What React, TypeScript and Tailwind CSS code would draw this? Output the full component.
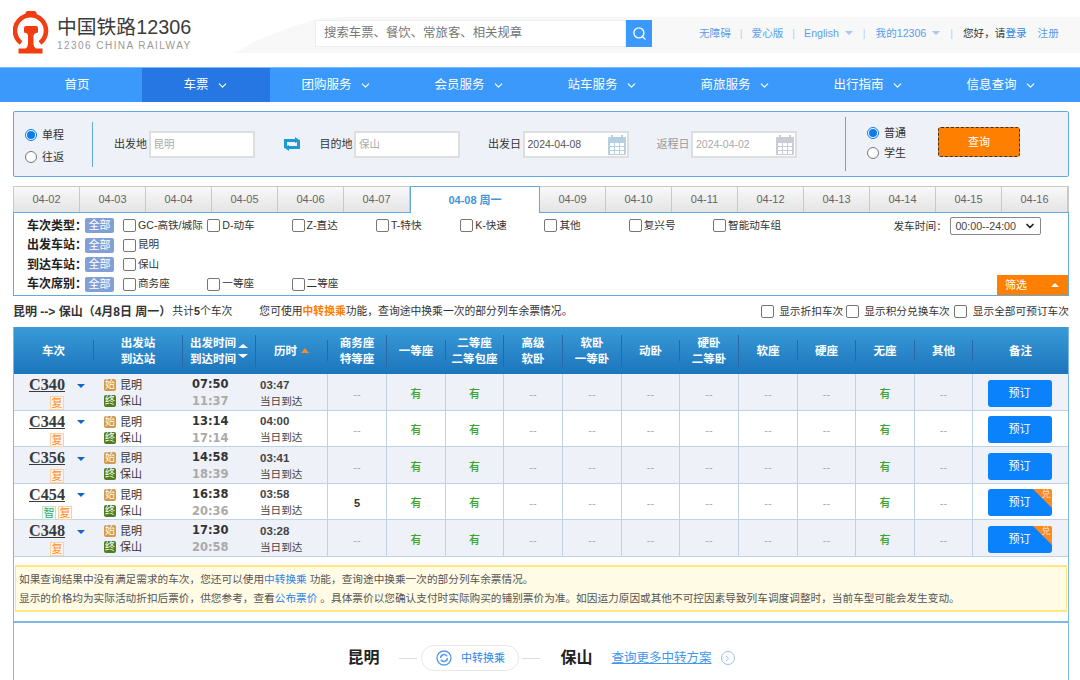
import { Search, ChevronDown, ChevronRight } from "lucide-react";

const widths = "grid-cols-[80px_89px_73px_72px_59px_59px_58px_59px_59px_58px_59px_59px_58px_59px_58px_95px]";
const headers = [["车次"], ["出发站", "到达站"], ["出发时间", "到达时间"], ["历时"], ["商务座", "特等座"], ["一等座"], ["二等座", "二等包座"], ["高级", "软卧"], ["软卧", "一等卧"], ["动卧"], ["硬卧", "二等卧"], ["软座"], ["硬座"], ["无座"], ["其他"], ["备注"]];
const rows = [
  { no: "C340", tags: ["复"], dep: "07:50", arr: "11:37", dur: "03:47", biz: "--", swap: false },
  { no: "C344", tags: ["复"], dep: "13:14", arr: "17:14", dur: "04:00", biz: "--", swap: false },
  { no: "C356", tags: ["复"], dep: "14:58", arr: "18:39", dur: "03:41", biz: "--", swap: false },
  { no: "C454", tags: ["智", "复"], dep: "16:38", arr: "20:36", dur: "03:58", biz: "5", swap: true },
  { no: "C348", tags: ["复"], dep: "17:30", arr: "20:58", dur: "03:28", biz: "--", swap: true },
];
const dates = ["04-02", "04-03", "04-04", "04-05", "04-06", "04-07"];
const dates2 = ["04-09", "04-10", "04-11", "04-12", "04-13", "04-14", "04-15", "04-16"];
const nav = ["团购服务", "会员服务", "站车服务", "商旅服务", "出行指南", "信息查询"];
const types = ["GC-高铁/城际", "D-动车", "Z-直达", "T-特快", "K-快速", "其他", "复兴号", "智能动车组"];

function Logo() {
  return (
    <svg width="36" height="43" viewBox="0 0 36 43" className="shrink-0 -mt-[2px]">
      <path d="M8 32 A15.5 15.5 0 1 1 27 32" fill="none" stroke="#f23c12" strokeWidth="4.6" />
      <path d="M12 5 Q12 0 15 0 H21 Q24 0 24 5 Z" fill="#f23c12" />
      <path d="M11 17 Q11 15 13 15 H23 Q25 15 25 17 V21 Q25 22 23 22 Q20.5 22.5 20.5 25 V32 Q20.5 36 23 37.5 H29.5 V42.5 H5.5 V37.5 H12.5 Q15 36 15 32 V25 Q15 22.5 13 22 Q11 22 11 21 Z" fill="#f23c12" />
    </svg>
  );
}

function Radio({ on, label }: { on?: boolean; label: string }) {
  return (
    <div className="flex items-center gap-[5px] text-[11px] leading-[12px] text-[#333]">
      <span className={"w-[12px] h-[12px] rounded-full bg-white flex items-center justify-center border " + (on ? "border-[#0a7cf0]" : "border-[#777]")}>
        {on && <span className="w-[8px] h-[8px] rounded-full bg-[#0a7cf0]" />}
      </span>
      {label}
    </div>
  );
}

function Box() {
  return <span className="w-[13px] h-[13px] shrink-0 rounded-[2px] border border-[#767676] bg-white" />;
}

function Calendar({ c }: { c: string }) {
  return (
    <svg width="18" height="20" viewBox="0 0 18 20">
      <rect x="0" y="2" width="18" height="18" rx="1" fill={c} />
      <rect x="3" y="0" width="2" height="4" fill={c} />
      <rect x="13" y="0" width="2" height="4" fill={c} />
      {[0, 1, 2].map((r) => [0, 1, 2].map((k) => <rect key={`${r}${k}`} x={2 + k * 5} y={8 + r * 4} width="4" height="3" fill="#fff" />))}
    </svg>
  );
}

function Field({ label, value, muted, cal, calColor }: { label: string; value: string; muted?: boolean; cal?: boolean; calColor?: string }) {
  return (
    <div className="flex items-center gap-[1.5px] mt-[1px]">
      <span className={"text-[11px] whitespace-nowrap " + (muted ? "text-[#999]" : "text-[#333]")}>{label}</span>
      <div className={"w-[106px] h-[27px] bg-white border-2 border-[#dedede] flex items-center justify-between pl-[3px] pr-[1px] text-[10.5px] " + (muted || !cal ? "text-[#aaa]" : "text-[#555]")}>
        {value}
        {cal && <Calendar c={calColor || "#b7cfe3"} />}
      </div>
    </div>
  );
}

function Tab({ d }: { d: string }) {
  return <div className="flex-1 h-full flex items-center justify-center border-r border-[#c9c9c9] text-[11px] text-[#666] bg-gradient-to-b from-[#f9f9f9] to-[#e4e4e4]">{d}</div>;
}

function FilterRow({ label, items, right }: { label: string; items: string[]; right?: boolean }) {
  return (
    <div className="flex items-center h-[19.5px]">
      <b className="w-[58px] text-[12px] text-[#222] whitespace-nowrap">{label}：</b>
      <span className="w-[29px] h-[15px] rounded-[2px] bg-[#839fd5] text-white text-[11px] leading-[15px] text-center mr-[9px]">全部</span>
      {items.map((t) => (
        <label key={t} className="w-[84.3px] flex items-center gap-[2px] text-[10.6px] text-[#333] whitespace-nowrap">
          <Box />
          {t}
        </label>
      ))}
      {right && (
        <div className="flex items-center ml-[96px] text-[10.7px] text-[#333]">
          <span className="w-[57px]">发车时间：</span>
          <div className="w-[91px] h-[18px] border border-[#888] rounded-[2px] flex items-center justify-between px-[4px] text-[#444]">
            00:00--24:00
            <ChevronDown size={12} strokeWidth={3.5} className="text-[#222]" />
          </div>
        </div>
      )}
    </div>
  );
}

function Cell({ v }: { v: string }) {
  const has = v === "有";
  return <div className={"flex items-center justify-center pt-[4px] border-r border-[#bdd3e4] text-[11px] " + (has ? "text-[#3aa52d] font-medium" : v === "5" ? "text-[#333] font-bold" : "text-[#aaa]")}>{v}</div>;
}

export default function App() {
  return (
    <div className="relative w-[1080px] h-[680px] overflow-hidden bg-white font-['Liberation_Sans','Noto_Sans_CJK_SC',sans-serif]">
      <svg className="absolute left-[234px] top-[17px]" width="846" height="36" viewBox="0 0 846 36">
        <path d="M0 36 Q30 18 70 6 Q85 0 110 0 H846 V36 Z" fill="#f8f8f8" />
      </svg>

      <header className="relative h-[67px] flex items-center">
        <div className="pl-[13px] flex items-center gap-[8px] w-[315px]">
          <Logo />
          <div className="flex flex-col">
            <span className="text-[19.8px] leading-[24px] text-[#3c3c3c] whitespace-nowrap">中国铁路12306</span>
            <span className="text-[10px] leading-[13px] text-[#999] tracking-[1.45px] whitespace-nowrap">12306 CHINA RAILWAY</span>
          </div>
        </div>
        <div className="flex h-[27px] w-[337px]">
          <div className="flex-1 bg-white border border-[#eee] pl-[8px] flex items-center text-[12.4px] text-[#777]">搜索车票、餐饮、常旅客、相关规章</div>
          <div className="w-[26px] bg-[#3b99fc] flex items-center justify-center"><Search size={15} strokeWidth={2.2} className="text-white" /></div>
        </div>
        <div className="flex items-center ml-[47px] text-[10.6px] text-[#5c9ceb] whitespace-nowrap">
          <span>无障碍</span><span className="mx-[9px] text-[#b5cfee]">|</span>
          <span>爱心版</span><span className="mx-[9px] text-[#b5cfee]">|</span>
          <span>English</span><span className="ml-[6px] w-0 h-0 border-x-[4px] border-x-transparent border-t-[4px] border-t-[#a9c6ee]" /><span className="mx-[10px] text-[#b5cfee]">|</span>
          <span>我的12306</span><span className="ml-[6px] w-0 h-0 border-x-[4px] border-x-transparent border-t-[4px] border-t-[#a9c6ee]" /><span className="mx-[10px] text-[#b5cfee]">|</span>
          <span className="text-[#333]">您好，请</span><span className="text-[#2d84e8]">登录</span>
          <span className="ml-[11px]">注册</span>
        </div>
      </header>

      <nav className="h-[35px] bg-[#3b99fc] border-t border-[#7fbcfb] grid grid-cols-[142px_128px_repeat(6,133px)] text-[12.5px] text-white">
        <div className="flex items-center justify-center pl-[12px]">首页</div>
        <div className="flex items-center justify-center gap-[7px] bg-[#2676e3]">车票<ChevronDown size={13} strokeWidth={2} /></div>
        {nav.map((n) => (
          <div key={n} className="flex items-center justify-center gap-[7px]">{n}<ChevronDown size={13} strokeWidth={2} /></div>
        ))}
      </nav>

      <main className="ml-[13px] w-[1056px] flex flex-col">
        <section className="mt-[9px] h-[66px] bg-[#eef1f8] border border-[#63a9d9] rounded-[2px] flex items-center pl-[11px]">
          <div className="flex flex-col gap-[10px] mt-[3px] w-[67px] shrink-0">
            <Radio on label="单程" />
            <Radio label="往返" />
          </div>
          <div className="w-px h-[45px] bg-[#63a9d9] mr-[21px]" />
          <Field label="出发地" value="昆明" />
          <svg width="16" height="14" viewBox="0 0 16 14" className="ml-[29px] mr-[20px]" fill="none">
            <path d="M1.5 11 V3.5 H12" stroke="#1b9bd1" strokeWidth="3" />
            <path d="M14.5 3 V10.5 H4" stroke="#1b9bd1" strokeWidth="3" />
            <path d="M11 0 L16 3.5 L11 6 Z" fill="#1b9bd1" />
            <path d="M5 8 L0 10.5 L5 14 Z" fill="#1b9bd1" />
          </svg>
          <Field label="目的地" value="保山" />
          <div className="w-[28px]" />
          <Field label="出发日" value="2024-04-08" cal />
          <div className="w-[28px]" />
          <Field label="返程日" value="2024-04-02" muted cal calColor="#c9ccd2" />
          <div className="w-px h-[54px] bg-[#63a9d9] ml-[48px] mr-[21px]" />
          <div className="flex flex-col gap-[8px] mb-[2px] w-[71px] shrink-0">
            <Radio on label="普通" />
            <Radio label="学生" />
          </div>
          <div className="w-[82px] h-[30px] mb-[4px] bg-[#ff8000] border border-dashed border-[#333] rounded-[3px] flex items-center justify-center text-white text-[11px]">查询</div>
        </section>

        <section className="mt-[9px] h-[26px] flex border-t border-x border-[#c9c9c9]">
          {dates.map((d) => <Tab key={d} d={d} />)}
          <div className="w-[130px] shrink-0 h-[27px] bg-white border border-b-0 border-[#63a9d9] -mt-px flex items-center justify-center text-[11px] font-bold text-[#3f97dc] z-10">04-08 周一</div>
          {dates2.map((d) => <Tab key={d} d={d} />)}
        </section>

        <section className="relative h-[84px] border border-[#63a9d9] pl-[13px] pt-[3px] flex flex-col">
          <FilterRow label="车次类型" items={types} right />
          <FilterRow label="出发车站" items={["昆明"]} />
          <FilterRow label="到达车站" items={["保山"]} />
          <FilterRow label="车次席别" items={["商务座", "一等座", "二等座"]} />
          <div className="absolute right-0 bottom-0 w-[71px] h-[20px] bg-[#ff8000] text-white text-[11px] flex items-center justify-between pl-[8px] pr-[9px]">
            筛选
            <span className="w-0 h-0 border-x-[4px] border-x-transparent border-b-[4px] border-b-white" />
          </div>
        </section>

        <section className="h-[31px] flex items-center text-[10.8px] text-[#333] whitespace-nowrap">
          <b className="text-[12px]">昆明 --&gt; 保山（4月8日  周一）</b>
          <span className="ml-px">共计<b>5</b>个车次</span>
          <span className="ml-[27px]">您可使用<b className="text-[#ff8000]">中转换乘</b>功能，查询途中换乘一次的部分列车余票情况。</span>
          <div className="ml-auto flex items-center text-[10.7px]">
            <Box /><span className="ml-[5px] mr-[3px]">显示折扣车次</span>
            <Box /><span className="ml-[5px] mr-[4px]">显示积分兑换车次</span>
            <Box /><span className="ml-[6px]">显示全部可预订车次</span>
          </div>
        </section>

        <section className="border-x border-[#7fb8e0] flex flex-col">
          <div className={"grid h-[47px] items-center bg-gradient-to-b from-[#3a9bd9] to-[#1b75bb] text-white text-[11.5px] font-bold text-center " + widths}>
            {headers.map((h, i) => (
              <div key={i} className={"flex items-center justify-center min-h-[21px] leading-[16px] " + (i < 15 ? "border-r border-[#2a66a8]" : "")}>
                <div>{h.map((t) => <div key={t} className="whitespace-nowrap">{t}</div>)}</div>
                {i === 2 && (
                  <div className="flex flex-col gap-[6px] ml-[2px]">
                    <span className="w-0 h-0 border-x-[5px] border-x-transparent border-b-[4px] border-b-white" />
                    <span className="w-0 h-0 border-x-[5px] border-x-transparent border-t-[4px] border-t-white" />
                  </div>
                )}
                {i === 3 && <span className="ml-[4px] w-0 h-0 border-x-[4px] border-x-transparent border-b-[5px] border-b-[#ff8a2a]" />}
              </div>
            ))}
          </div>
          {rows.map((r, idx) => (
            <div key={r.no} className={"grid h-[36.5px] border-b border-[#bdd3e4] " + widths + " " + (idx % 2 === 0 ? "bg-[#eef1f8]" : "bg-white")}>
              <div className="flex flex-col pt-[2px] items-center">
                <div className="flex items-center ml-[6px]">
                  <span className="font-['Liberation_Serif'] font-bold text-[16.2px] leading-[19px] underline text-[#3a3a3a]">{r.no}</span>
                  <span className="ml-[12px] w-0 h-0 border-x-[4px] border-x-transparent border-t-[4px] border-t-[#1265c8]" />
                </div>
                <div className="flex gap-[2px] ml-[6px] mt-px">
                  {r.tags.map((t) => (
                    <span key={t} className={"w-[14px] h-[14px] border text-[11px] leading-[12px] text-center " + (t === "复" ? "border-[#ffd0a0] bg-[#fff7ee] text-[#ff8a2a]" : "border-[#bfe5cf] bg-[#f2fbf6] text-[#3aa56a]")}>{t}</span>
                  ))}
                </div>
              </div>
              <div className="pl-[10px] pt-[2px] flex flex-col justify-center gap-[4px] text-[11px] leading-[12px] text-[#333]">
                <div className="flex items-center gap-[4px]"><span className="w-[12px] h-[12px] rounded-[2px] bg-[#d29a4c] text-white text-[10px] leading-[12px] text-center">始</span>昆明</div>
                <div className="flex items-center gap-[4px]"><span className="w-[12px] h-[12px] rounded-[2px] bg-[#4f7f21] text-white text-[10px] leading-[12px] text-center">终</span>保山</div>
              </div>
              <div className="pl-[9px] pt-[2px] flex flex-col justify-center gap-[4px] font-['DejaVu_Sans'] font-bold text-[11.5px] leading-[13px]">
                <span className="text-[#333]">{r.dep}</span>
                <span className="text-[#aaa]">{r.arr}</span>
              </div>
              <div className="pl-[4px] pt-[1px] flex flex-col justify-center gap-[2px] text-[10.6px] leading-[14px] text-[#444] border-r border-[#bdd3e4]">
                <b className="text-[11.5px] text-[#444]">{r.dur}</b>
                <span>当日到达</span>
              </div>
              <Cell v={r.biz} />
              <Cell v="有" />
              <Cell v="有" />
              {["a", "b", "c", "d", "e", "f"].map((k) => <Cell key={k} v="--" />)}
              <Cell v="有" />
              <Cell v="--" />
              <div className="flex items-center justify-center pt-[2px] pr-[2px]">
                <div className="relative w-[64px] h-[27px] rounded-[3px] bg-[#0a82fb] text-white text-[11px] flex items-center justify-center overflow-hidden">
                  预订
                  {r.swap && (
                    <>
                      <span className="absolute right-0 top-0 w-0 h-0 border-l-[19px] border-l-transparent border-t-[19px] border-t-[#ff8a1e]" />
                      <span className="absolute right-[1px] top-0 text-[9px] leading-[11px] text-[#ffe2c0]">兑</span>
                    </>
                  )}
                </div>
              </div>
            </div>
          ))}
          <div className="h-[8.5px]" />
        </section>

        <section className="border-x border-[#7fb8e0] px-px">
          <div className="h-[47px] bg-[#fffbe5] border-y-2 border-x border-[#ffe680] pl-[3px] flex flex-col justify-center gap-[5px] text-[10.66px] leading-[14px] text-[#555] whitespace-nowrap overflow-hidden">
            <div>如果查询结果中没有满足需求的车次，您还可以使用<span className="text-[#2d84e8]">中转换乘</span> 功能，查询途中换乘一次的部分列车余票情况。</div>
            <div>显示的价格均为实际活动折扣后票价，供您参考，查看<span className="text-[#2d84e8]">公布票价</span> 。具体票价以您确认支付时实际购买的铺别票价为准。如因运力原因或其他不可控因素导致列车调度调整时，当前车型可能会发生变动。</div>
          </div>
          <div className="h-[9px]" />
        </section>

        <section className="h-[70px] border-x border-t-2 border-[#7fb8e0] flex items-start justify-center pt-[22px] gap-0">
          <b className="text-[16px] leading-[26px] text-[#222] font-['Liberation_Serif','Noto_Sans_CJK_SC']">昆明</b>
          <div className="w-[18px] h-px bg-[#ddd] mt-[13px] ml-[20px] mr-[4px]" />
          <div className="w-[98px] h-[26px] rounded-full border border-[#e8e8e8] flex items-center justify-center gap-[9px] text-[11px] text-[#2d84e8]">
            <svg width="16" height="16" viewBox="0 0 16 16" fill="none" stroke="#5e9bf5" strokeWidth="1.4">
              <circle cx="8" cy="8" r="7" />
              <path d="M4.6 8 A3.4 3.4 0 0 1 11 6.4 M11.4 8 A3.4 3.4 0 0 1 5 9.6" strokeWidth="1.6" />
            </svg>
            中转换乘
          </div>
          <div className="w-[18px] h-px bg-[#ddd] mt-[13px] ml-[3px] mr-[20px]" />
          <b className="text-[16px] leading-[26px] text-[#222] font-['Liberation_Serif','Noto_Sans_CJK_SC']">保山</b>
          <span className="ml-[19px] text-[12.5px] leading-[26px] text-[#3f97ee] underline whitespace-nowrap">查询更多中转方案</span>
          <span className="ml-[9px] mt-[6px] w-[14px] h-[14px] rounded-full border border-[#9cc0f0] flex items-center justify-center text-[#7aa8ea]"><ChevronRight size={9} /></span>
        </section>
      </main>
    </div>
  );
}
